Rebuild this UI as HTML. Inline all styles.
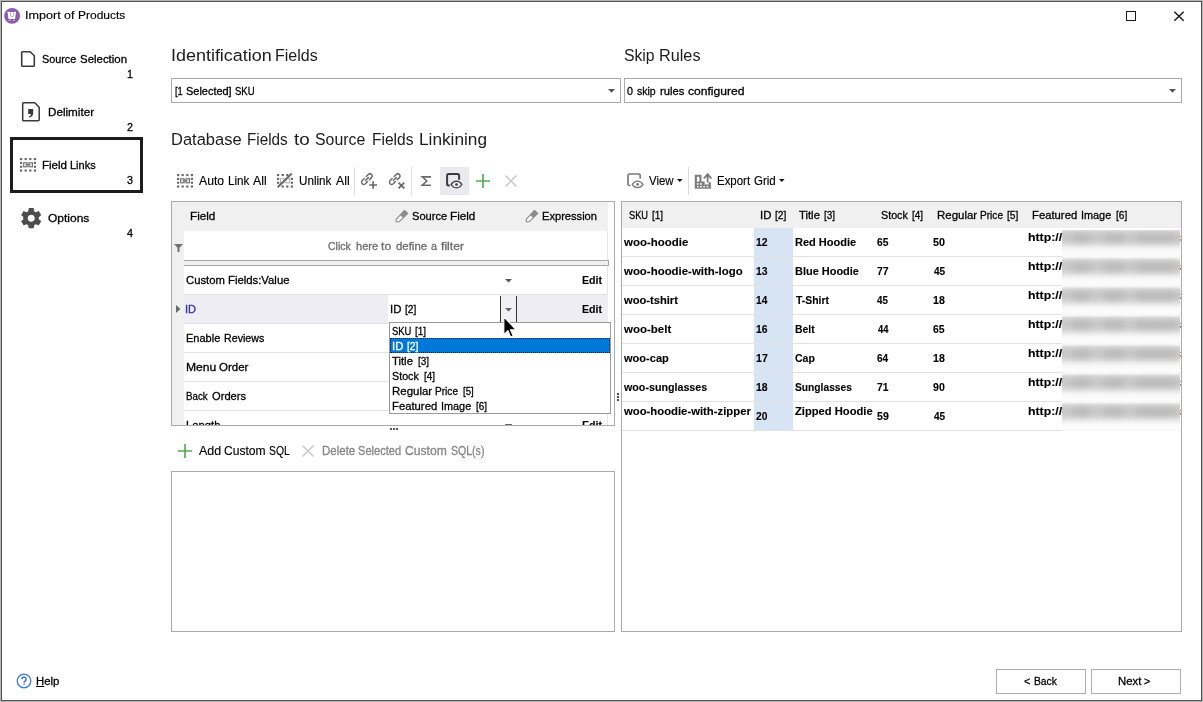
<!DOCTYPE html>
<html><head><meta charset="utf-8"><title>Import of Products</title>
<style>
*{box-sizing:border-box;margin:0;padding:0}
html,body{width:1203px;height:702px;overflow:hidden;background:#fff}
body{position:relative;font-family:"Liberation Sans",sans-serif;font-size:12px;color:#000;-webkit-text-stroke:0.3px currentColor}
.a{position:absolute}
.t{position:absolute;white-space:nowrap;line-height:20px;height:20px;transform-origin:0 0}
.box{position:absolute;border:1px solid #ababab;background:#fff}
.ln{position:absolute;height:1px;background:#e2e2e2}
svg{position:absolute;overflow:visible}
</style></head><body>
<!-- window frame -->
<div class="a" style="left:0;top:0;width:1203px;height:702px;border:1px solid #b4b4b4"></div>
<div class="a" style="left:1px;top:1px;width:1201px;height:700px;border:1px solid #555"></div>

<!-- title bar -->
<svg style="left:0;top:0" width="1" height="1"><circle cx="12.100" cy="15.900" r="7.900" fill="#8a5cb0"/><path d="M7.100 11.700H9.300V12.100H14.300V11.700H16L15.200 18.300Q15.100 18.900 14.500 18.900H9Q8.400 18.900 8.300 18.300L7.700 13Z" fill="#fff"/><path d="M10.400 12.300V15.100A1.550 1.550 0 0 0 13.500 15.100V12.300" stroke="#a99bc6" stroke-width=".800" fill="none"/><rect x="8.700" y="19.700" width="1.800" height="1.100" rx=".5" fill="#efe6f6"/><rect x="12.900" y="19.700" width="1.800" height="1.100" rx=".5" fill="#efe6f6"/></svg>
<div class="a" style="left:1126px;top:11px;width:10px;height:10px;border:1px solid #1a1a1a"></div>
<svg style="left:1174px;top:11px" width="10" height="10"><path d="M0.3 0.8L9.7 9.8M9.7 0.8L0.3 9.8" stroke="#1a1a1a" stroke-width="1.450" fill="none"/></svg>

<!-- sidebar icons -->
<svg style="left:21px;top:51px" width="14" height="16" viewBox="0 0 14 16"><path d="M1.6.7h7.6l4.1 4.1v9.6a.9.9 0 0 1-.9.9H1.6a.9.9 0 0 1-.9-.9V1.6a.9.9 0 0 1 .9-.9z" fill="none" stroke="#3a3a3a" stroke-width="1.600" stroke-linejoin="round"/></svg>
<svg style="left:22px;top:102px" width="18" height="20" viewBox="0 0 18 20"><path d="M1.6.8h11.2l4.4 4.4v12.6a.9.9 0 0 1-.9.9H1.6a.9.9 0 0 1-.9-.9V1.7a.9.9 0 0 1 .9-.9z" fill="none" stroke="#3a3a3a" stroke-width="1.5" stroke-linejoin="round"/><path d="M6.2 7h5v4.3c0 2.2-1.400 3.800-3.800 4.300l-.5-1.200c1.300-.4 2-1.100 2.100-2.400H6.200z" fill="#3a3a3a"/></svg>
<div class="a" style="left:10px;top:137px;width:133px;height:56px;border:3px solid #1c1c1c"></div>
<svg id="fl-ico" style="left:20px;top:158px" width="16" height="14" viewBox="0 0 16 14"><g fill="#686868"><rect x="0" y="0" width="2.200" height="2.100"/><rect x="4.6" y="0" width="2.200" height="2.100"/><rect x="9.2" y="0" width="2.200" height="2.100"/><rect x="13.8" y="0" width="2.200" height="2.100"/><rect x="0" y="3.85" width="2.200" height="2.100"/><rect x="13.8" y="3.85" width="2.200" height="2.100"/><rect x="0" y="7.7" width="2.200" height="2.100"/><rect x="13.8" y="7.7" width="2.200" height="2.100"/><rect x="0" y="11.5" width="2.200" height="2.100"/><rect x="4.6" y="11.5" width="2.200" height="2.100"/><rect x="9.2" y="11.5" width="2.200" height="2.100"/><rect x="13.8" y="11.5" width="2.200" height="2.100"/></g><g fill="none" stroke="#707070" stroke-width="1.150"><rect x="3.700" y="4.800" width="3.400" height="4"/><rect x="9" y="4.800" width="3.400" height="4"/><path d="M5.500 6.800h5"/></g></svg>
<svg style="left:18.600px;top:205.700px" width="24.400" height="24.400" viewBox="0 0 24 24"><path fill="#4d4d4d" d="M19.430 12.980c.04-.32.070-.64.070-.98s-.03-.66-.07-.98l2.110-1.650c.19-.15.240-.42.120-.64l-2-3.460c-.12-.22-.39-.3-.61-.22l-2.490 1c-.52-.4-1.080-.73-1.690-.98l-.38-2.650C14.460 2.180 14.250 2 14 2h-4c-.25 0-.46.180-.49.420l-.38 2.650c-.61.250-1.170.59-1.690.98l-2.490-1c-.23-.09-.49 0-.61.220l-2 3.460c-.13.220-.07.490.12.640l2.110 1.650c-.4.320-.7.650-.7.980s.3.660.7.980l-2.110 1.650c-.19.150-.24.420-.12.640l2 3.460c.12.220.39.300.61.220l2.490-1c.52.400 1.080.73 1.690.98l.38 2.650c.3.240.24.420.49.420h4c.25 0 .46-.18.490-.42l.38-2.650c.61-.25 1.170-.59 1.690-.98l2.490 1c.23.090.49 0 .61-.22l2-3.460c.12-.22.070-.49-.12-.64l-2.110-1.650zM12 15.500c-1.930 0-3.500-1.570-3.500-3.500s1.570-3.500 3.500-3.500 3.500 1.570 3.500 3.500-1.570 3.500-3.500 3.500z"/></svg>

<!-- combos -->
<div class="box" style="left:171px;top:78px;width:450px;height:25px"></div>
<svg style="left:608px;top:89px" width="7" height="4"><path d="M0 0h7L3.500 3.800z" fill="#555"/></svg>
<div class="box" style="left:624px;top:78px;width:558px;height:25px"></div>
<svg style="left:1168.500px;top:89px" width="7" height="4"><path d="M0 0h7L3.500 3.800z" fill="#555"/></svg>

<!-- left toolbar -->
<svg style="left:177px;top:174.300px" width="16" height="14" viewBox="0 0 16 14"><g fill="#686868"><rect x="0" y="0" width="2.200" height="2.100"/><rect x="4.6" y="0" width="2.200" height="2.100"/><rect x="9.2" y="0" width="2.200" height="2.100"/><rect x="13.8" y="0" width="2.200" height="2.100"/><rect x="0" y="3.85" width="2.200" height="2.100"/><rect x="13.8" y="3.85" width="2.200" height="2.100"/><rect x="0" y="7.7" width="2.200" height="2.100"/><rect x="13.8" y="7.7" width="2.200" height="2.100"/><rect x="0" y="11.5" width="2.200" height="2.100"/><rect x="4.6" y="11.5" width="2.200" height="2.100"/><rect x="9.2" y="11.5" width="2.200" height="2.100"/><rect x="13.8" y="11.5" width="2.200" height="2.100"/></g><g fill="none" stroke="#707070" stroke-width="1.150"><rect x="3.700" y="4.800" width="3.400" height="4"/><rect x="9" y="4.800" width="3.400" height="4"/><path d="M5.500 6.800h5"/></g></svg>
<svg style="left:277px;top:174.300px" width="16" height="14" viewBox="0 0 16 14"><g fill="#686868"><rect x="0" y="0" width="2.200" height="2.100"/><rect x="4.6" y="0" width="2.200" height="2.100"/><rect x="9.2" y="0" width="2.200" height="2.100"/><rect x="0" y="3.85" width="2.200" height="2.100"/><rect x="13.8" y="3.85" width="2.200" height="2.100"/><rect x="0" y="7.7" width="2.200" height="2.100"/><rect x="13.8" y="7.7" width="2.200" height="2.100"/><rect x="4.6" y="11.5" width="2.200" height="2.100"/><rect x="9.2" y="11.5" width="2.200" height="2.100"/><rect x="13.8" y="11.5" width="2.200" height="2.100"/></g><g fill="none" stroke="#b0b0b0" stroke-width="1"><rect x="3.500" y="4.700" width="3.600" height="4.200"/><rect x="9" y="4.700" width="3.600" height="4.200"/></g><path d="M0.600 13.200L14.800 -.5" stroke="#6a6a6a" stroke-width="2"/></svg>
<div class="a" style="left:354px;top:167px;width:1px;height:28px;background:#dcdcdc"></div>
<!-- link + -->
<svg style="left:0;top:0" width="1" height="1"><g transform="translate(366.85 179.05) rotate(-45)" fill="none" stroke="#6e6e6e" stroke-width="1.5" stroke-linecap="round"><path d="M-1.400 -2.250H-4.300A2.250 2.250 0 0 0 -4.300 2.250H-1.400"/><path d="M1.400 2.250H4.300A2.250 2.250 0 0 0 4.300 -2.250H1.400"/><path d="M-2 0H2"/></g><path d="M369.200 185H377M373.100 181.200V188.800" stroke="#666" stroke-width="1.600" fill="none"/></svg>
<!-- link x -->
<svg style="left:0;top:0" width="1" height="1"><g transform="translate(394.75 179.05) rotate(-45)" fill="none" stroke="#6e6e6e" stroke-width="1.5" stroke-linecap="round"><path d="M-1.400 -2.250H-4.300A2.250 2.250 0 0 0 -4.300 2.250H-1.400"/><path d="M1.400 2.250H4.300A2.250 2.250 0 0 0 4.300 -2.250H1.400"/><path d="M-2 0H2"/></g><path d="M398.500 182.600l5.800 5.800M404.300 182.600l-5.800 5.800" stroke="#666" stroke-width="1.700" fill="none"/></svg>
<div class="a" style="left:411px;top:167px;width:1px;height:28px;background:#dcdcdc"></div>
<!-- sigma -->
<svg style="left:0;top:0" width="1" height="1"><path d="M431 176.800H422.300L426.800 181L422.300 185.200H431" fill="none" stroke="#6c6c6c" stroke-width="1.650" stroke-linejoin="miter"/></svg>
<div class="a" style="left:440px;top:167px;width:29px;height:28px;background:#e9e9ef"></div>
<svg style="left:0;top:0" width="1" height="1"><path d="M449.800 185.500H448.600A1.500 1.500 0 0 1 447.100 184V175.500A1.500 1.500 0 0 1 448.600 174H457.600A1.500 1.500 0 0 1 459.100 175.500V179.700" fill="none" stroke="#3a3a40" stroke-width="2"/><path d="M451.1 184.5C452.7 181.9 454.5 181.2 456.5 181.2S460.3 181.9 461.9 184.5C460.3 187.1 458.5 187.8 456.5 187.8S452.7 187.1 451.1 184.5Z" fill="#e9e9ee" stroke="#3a3a40" stroke-width="1.250"/><circle cx="456.500" cy="184.500" r="1.350" fill="#3a3a40"/></svg>
<svg style="left:476px;top:174px" width="14" height="14"><path d="M7 0v14M0 7h14" stroke="#58ab58" stroke-width="1.700"/></svg>
<svg style="left:505px;top:175px" width="12" height="12"><path d="M0.500 0.500l11 11M11.500 0.500l-11 11" stroke="#c9c9c9" stroke-width="1.500"/></svg>

<!-- left grid -->
<div class="box" style="left:171px;top:201px;width:444px;height:225px"></div>
<div class="a" style="left:172px;top:202px;width:436px;height:29px;background:#f0f0f0"></div>
<div class="a" style="left:172px;top:202px;width:12px;height:223px;background:#f0f0f0"></div>
<div class="a" style="left:607px;top:231px;width:1px;height:194px;background:#e6e6e6"></div>
<svg style="left:395px;top:209px" width="14" height="14" viewBox="0 0 14 14"><path d="M1.200 12.800L1.300 10.100L9.500 1.500L12.700 4.400L4.300 12.700Z" fill="#fafafa" stroke="#8c8c8c" stroke-width="1.100" stroke-linejoin="round"/><path d="M5.300 5.900L9.500 1.500L12.700 4.400L8.400 8.800Z" fill="#8c8c8c" stroke="#8c8c8c" stroke-width=".6"/></svg>
<svg style="left:524.7px;top:209px" width="14" height="14" viewBox="0 0 14 14"><path d="M1.200 12.800L1.300 10.100L9.500 1.500L12.700 4.400L4.300 12.700Z" fill="#fafafa" stroke="#8c8c8c" stroke-width="1.100" stroke-linejoin="round"/><path d="M5.300 5.900L9.500 1.500L12.700 4.400L8.400 8.800Z" fill="#8c8c8c" stroke="#8c8c8c" stroke-width=".6"/></svg>
<svg style="left:173.500px;top:244px" width="9" height="8" viewBox="0 0 9 8"><path d="M0 0h9L5.500 3.800v4.200h-2V3.800z" fill="#707070"/></svg>
<div class="a" style="left:184px;top:260px;width:425px;height:6px;border:1px solid #a6a6a6;border-left:0;background:#f0f0f0"></div>
<div class="ln" style="left:184px;top:294px;width:424px"></div>
<div class="a" style="left:184px;top:295px;width:424px;height:28px;background:#ededf3"></div>
<div class="ln" style="left:184px;top:323px;width:424px"></div>
<div class="ln" style="left:184px;top:352px;width:424px"></div>
<div class="ln" style="left:184px;top:381px;width:424px"></div>
<div class="ln" style="left:184px;top:410px;width:424px"></div>
<svg style="left:504.500px;top:279px" width="7" height="4"><path d="M0 0h7L3.500 3.600z" fill="#555"/></svg>
<div class="a" style="left:504.500px;top:424px;width:7px;height:1px;background:#666"></div>
<svg style="left:176px;top:305px" width="5" height="8"><path d="M0 0l4.500 4L0 8z" fill="#6a6a6a"/></svg>
<!-- editor -->
<div class="a" style="left:388px;top:295px;width:112px;height:28px;background:#fff"></div>
<div class="a" style="left:500px;top:296px;width:17px;height:27px;background:#f0f0f5;border-left:1px solid #333;border-right:1px solid #333"></div>
<svg style="left:504.500px;top:308px" width="7" height="4"><path d="M0 0h7L3.500 3.600z" fill="#666"/></svg>
<!-- dropdown list -->
<div class="a" style="left:389px;top:322px;width:222px;height:92px;border:1px solid #9a9a9a;background:#fff"></div>
<div class="a" style="left:390px;top:338px;width:220px;height:15px;background:#0078d7;border:1px dotted #10253a"></div>
<!-- splitter dots -->
<div class="a" style="left:390px;top:428px;width:2px;height:2px;background:#555;box-shadow:3px 0 0 #555,6px 0 0 #555"></div>
<div class="a" style="left:617px;top:393px;width:2px;height:2px;background:#4a4a4a;box-shadow:0 3px 0 #4a4a4a,0 6px 0 #4a4a4a"></div>

<!-- sql toolbar -->
<svg style="left:178px;top:444px" width="14" height="14"><path d="M7 0v14M0 7h14" stroke="#58ab58" stroke-width="1.700"/></svg>
<svg style="left:302px;top:445px" width="12" height="12"><path d="M0.500 0.500l11 11M11.500 0.500l-11 11" stroke="#c9c9c9" stroke-width="1.500"/></svg>
<div class="box" style="left:171px;top:471px;width:444px;height:161px"></div>

<!-- right toolbar -->
<svg style="left:0;top:0" width="1" height="1"><path d="M630.400 185.500H629.400A1.400 1.400 0 0 1 628 184.100V175.400A1.400 1.400 0 0 1 629.400 174H638.800A1.400 1.400 0 0 1 640.200 175.400V178.600" fill="none" stroke="#7a7a7a" stroke-width="1.700"/><path d="M632.2 184.4C633.8 181.8 635.6 181.1 637.6 181.1S641.4 181.8 643.0 184.4C641.4 187.0 639.6 187.7 637.6 187.7S633.8 187.0 632.2 184.4Z" fill="#fff" stroke="#7a7a7a" stroke-width="1.250"/><circle cx="637.600" cy="184.400" r="1.400" fill="#7a7a7a"/></svg>
<svg style="left:677px;top:179px" width="6" height="3"><path d="M0 0h5.600L2.800 3z" fill="#111"/></svg>
<div class="a" style="left:688px;top:167px;width:1px;height:28px;background:#dcdcdc"></div>
<svg style="left:0;top:0" width="1" height="1"><path d="M695 175H701.200V181.700H704.400V184.700H708.800V182.500H710.700V188.400H695Z" fill="#7c7c7c" stroke="#7c7c7c" stroke-width=".5" stroke-linejoin="round"/><g fill="#fff"><rect x="696.900" y="176.800" width="2.500" height="4.800"/><rect x="696.900" y="183.100" width="1.700" height="1.600"/><rect x="700.100" y="183.100" width="1.700" height="1.600"/><rect x="696.900" y="185.900" width="1.700" height="1.500"/><rect x="700.100" y="185.900" width="1.700" height="1.500"/><rect x="703.300" y="185.900" width="1.700" height="1.500"/><rect x="706.500" y="185.900" width="1.700" height="1.500"/></g><path d="M707.600 182.600V175M703.800 178.500L707.600 174.200L711.400 178.500" fill="none" stroke="#777" stroke-width="1.800"/></svg>
<svg style="left:779px;top:179px" width="6" height="3"><path d="M0 0h5.600L2.800 3z" fill="#111"/></svg>

<!-- right grid -->
<div class="box" style="left:621px;top:201px;width:561px;height:431px"></div>
<div class="a" style="left:622px;top:202px;width:559px;height:26px;background:#f0f0f0"></div>
<div class="a" style="left:754px;top:228px;width:39px;height:202px;background:#d6e4f4"></div>
<div class="ln" style="left:622px;top:256px;width:559px"></div><div class="ln" style="left:622px;top:285px;width:559px"></div><div class="ln" style="left:622px;top:314px;width:559px"></div><div class="ln" style="left:622px;top:343px;width:559px"></div><div class="ln" style="left:622px;top:372px;width:559px"></div><div class="ln" style="left:622px;top:401px;width:559px"></div><div class="ln" style="left:622px;top:430px;width:559px"></div>
<!-- blurred urls -->
<div class="a" style="left:1062px;top:230px;width:118px;height:201px;overflow:hidden">
<div class="a" style="left:0;top:0;width:118px;height:203px;background:repeating-linear-gradient(180deg,#e0e0e0 0px,#d2d2d2 2px,#cacaca 5px,#c8c8c8 8px,#cdcdcd 11px,#dadada 14px,#ececec 17px,#f8f8f8 20px,#fcfcfc 24px,#f6f6f6 27.500px,#e0e0e0 29px)"></div>
<div class="a" style="left:10px;top:4px;width:18px;height:8px;background:#a8a8a8;opacity:.45;filter:blur(3px);border-radius:4px"></div><div class="a" style="left:42px;top:4px;width:20px;height:8px;background:#a8a8a8;opacity:.45;filter:blur(3px);border-radius:4px"></div><div class="a" style="left:74px;top:4px;width:40px;height:8px;background:#a8a8a8;opacity:.45;filter:blur(3px);border-radius:4px"></div><div class="a" style="left:10px;top:33px;width:18px;height:8px;background:#a8a8a8;opacity:.45;filter:blur(3px);border-radius:4px"></div><div class="a" style="left:42px;top:33px;width:20px;height:8px;background:#a8a8a8;opacity:.45;filter:blur(3px);border-radius:4px"></div><div class="a" style="left:74px;top:33px;width:40px;height:8px;background:#a8a8a8;opacity:.45;filter:blur(3px);border-radius:4px"></div><div class="a" style="left:10px;top:62px;width:18px;height:8px;background:#a8a8a8;opacity:.45;filter:blur(3px);border-radius:4px"></div><div class="a" style="left:42px;top:62px;width:20px;height:8px;background:#a8a8a8;opacity:.45;filter:blur(3px);border-radius:4px"></div><div class="a" style="left:74px;top:62px;width:40px;height:8px;background:#a8a8a8;opacity:.45;filter:blur(3px);border-radius:4px"></div><div class="a" style="left:10px;top:91px;width:18px;height:8px;background:#a8a8a8;opacity:.45;filter:blur(3px);border-radius:4px"></div><div class="a" style="left:42px;top:91px;width:20px;height:8px;background:#a8a8a8;opacity:.45;filter:blur(3px);border-radius:4px"></div><div class="a" style="left:74px;top:91px;width:40px;height:8px;background:#a8a8a8;opacity:.45;filter:blur(3px);border-radius:4px"></div><div class="a" style="left:10px;top:120px;width:18px;height:8px;background:#a8a8a8;opacity:.45;filter:blur(3px);border-radius:4px"></div><div class="a" style="left:42px;top:120px;width:20px;height:8px;background:#a8a8a8;opacity:.45;filter:blur(3px);border-radius:4px"></div><div class="a" style="left:74px;top:120px;width:40px;height:8px;background:#a8a8a8;opacity:.45;filter:blur(3px);border-radius:4px"></div><div class="a" style="left:10px;top:149px;width:18px;height:8px;background:#a8a8a8;opacity:.45;filter:blur(3px);border-radius:4px"></div><div class="a" style="left:42px;top:149px;width:20px;height:8px;background:#a8a8a8;opacity:.45;filter:blur(3px);border-radius:4px"></div><div class="a" style="left:74px;top:149px;width:40px;height:8px;background:#a8a8a8;opacity:.45;filter:blur(3px);border-radius:4px"></div><div class="a" style="left:10px;top:178px;width:18px;height:8px;background:#a8a8a8;opacity:.45;filter:blur(3px);border-radius:4px"></div><div class="a" style="left:42px;top:178px;width:20px;height:8px;background:#a8a8a8;opacity:.45;filter:blur(3px);border-radius:4px"></div><div class="a" style="left:74px;top:178px;width:40px;height:8px;background:#a8a8a8;opacity:.45;filter:blur(3px);border-radius:4px"></div>
</div>
<div class="a" style="left:1180px;top:235.5px;width:1px;height:1.500px;background:#b98f5e"></div><div class="a" style="left:1180px;top:239.0px;width:1px;height:1.500px;background:#b98f5e"></div><div class="a" style="left:1180px;top:264.5px;width:1px;height:1.500px;background:#b98f5e"></div><div class="a" style="left:1180px;top:268.0px;width:1px;height:1.500px;background:#b98f5e"></div><div class="a" style="left:1180px;top:293.5px;width:1px;height:1.500px;background:#b98f5e"></div><div class="a" style="left:1180px;top:297.0px;width:1px;height:1.500px;background:#b98f5e"></div><div class="a" style="left:1180px;top:322.5px;width:1px;height:1.500px;background:#b98f5e"></div><div class="a" style="left:1180px;top:326.0px;width:1px;height:1.500px;background:#b98f5e"></div><div class="a" style="left:1180px;top:351.5px;width:1px;height:1.500px;background:#b98f5e"></div><div class="a" style="left:1180px;top:355.0px;width:1px;height:1.500px;background:#b98f5e"></div><div class="a" style="left:1180px;top:380.5px;width:1px;height:1.500px;background:#b98f5e"></div><div class="a" style="left:1180px;top:384.0px;width:1px;height:1.500px;background:#b98f5e"></div><div class="a" style="left:1180px;top:409.5px;width:1px;height:1.500px;background:#b98f5e"></div><div class="a" style="left:1180px;top:413.0px;width:1px;height:1.500px;background:#b98f5e"></div>

<!-- help -->
<svg style="left:16px;top:673px" width="16" height="16" viewBox="0 0 16 16"><circle cx="8" cy="8" r="6.800" fill="#fff" stroke="#3f7ad6" stroke-width="1.300"/><path d="M5.900 6.300a2.100 2.100 0 1 1 3.300 1.700c-.8.500-1.100.9-1.100 1.700" fill="none" stroke="#3f7ad6" stroke-width="1.600"/><rect x="7.400" y="10.600" width="1.400" height="1.400" fill="#3f7ad6"/></svg>
<div class="box" style="left:996px;top:669px;width:90px;height:25px;border-color:#adadad"></div>
<div class="box" style="left:1091px;top:669px;width:90px;height:25px;border-color:#adadad"></div>

<!-- texts -->
<div><span class="t" style="left:24.8px;top:5px;font-size:11.7px;-webkit-text-stroke:0.15px #000;transform:scaleX(1.080)">Import</span> <span class="t" style="left:64.0px;top:5px;font-size:11.7px;-webkit-text-stroke:0.15px #000;transform:scaleX(1.070)">of</span> <span class="t" style="left:78.3px;top:5px;font-size:11.7px;-webkit-text-stroke:0.15px #000;transform:scaleX(1.026)">Products</span></div>
<div><span class="t" style="left:41.9px;top:49px;font-size:11.7px;transform:scaleX(0.925)">Source</span> <span class="t" style="left:79.6px;top:49px;font-size:11.7px;transform:scaleX(0.979)">Selection</span></div>
<div><span class="t" style="left:127.2px;top:64px;font-size:11.7px;transform:scaleX(0.920)">1</span></div>
<div><span class="t" style="left:47.7px;top:102px;font-size:11.7px;transform:scaleX(0.999)">Delimiter</span></div>
<div><span class="t" style="left:127.0px;top:117px;font-size:11.7px;transform:scaleX(0.920)">2</span></div>
<div><span class="t" style="left:41.8px;top:155px;font-size:11.7px;transform:scaleX(0.988)">Field</span> <span class="t" style="left:70.2px;top:155px;font-size:11.7px;transform:scaleX(0.941)">Links</span></div>
<div><span class="t" style="left:126.8px;top:170px;font-size:11.7px;transform:scaleX(0.920)">3</span></div>
<div><span class="t" style="left:47.8px;top:208px;font-size:11.7px;transform:scaleX(1.027)">Options</span></div>
<div><span class="t" style="left:126.7px;top:223px;font-size:11.7px;transform:scaleX(0.920)">4</span></div>
<div><span class="t" style="left:170.9px;top:46px;font-size:16.8px;color:#1c1c1c;-webkit-text-stroke:0;transform:scaleX(1.069)">Identification</span> <span class="t" style="left:275.2px;top:46px;font-size:16.8px;color:#1c1c1c;-webkit-text-stroke:0;transform:scaleX(0.954)">Fields</span></div>
<div><span class="t" style="left:623.7px;top:46px;font-size:16.8px;color:#1c1c1c;-webkit-text-stroke:0;transform:scaleX(0.938)">Skip</span> <span class="t" style="left:659.1px;top:46px;font-size:16.8px;color:#1c1c1c;-webkit-text-stroke:0;transform:scaleX(0.968)">Rules</span></div>
<div><span class="t" style="left:171.2px;top:130px;font-size:16.8px;color:#1c1c1c;-webkit-text-stroke:0;transform:scaleX(0.982)">Database</span> <span class="t" style="left:247.1px;top:130px;font-size:16.8px;color:#1c1c1c;-webkit-text-stroke:0;transform:scaleX(0.909)">Fields</span> <span class="t" style="left:293.8px;top:130px;font-size:16.8px;color:#1c1c1c;-webkit-text-stroke:0;transform:scaleX(1.120)">to</span> <span class="t" style="left:315.1px;top:130px;font-size:16.8px;color:#1c1c1c;-webkit-text-stroke:0;transform:scaleX(0.946)">Source</span> <span class="t" style="left:371.6px;top:130px;font-size:16.8px;color:#1c1c1c;-webkit-text-stroke:0;transform:scaleX(0.927)">Fields</span> <span class="t" style="left:419.0px;top:130px;font-size:16.8px;color:#1c1c1c;-webkit-text-stroke:0;transform:scaleX(1.027)">Linkining</span></div>
<div><span class="t" style="left:174.8px;top:81.2px;font-size:11.7px;transform:scaleX(0.803)">[1</span> <span class="t" style="left:185.8px;top:81.2px;font-size:11.7px;transform:scaleX(0.937)">Selected]</span> <span class="t" style="left:235.1px;top:81.2px;font-size:11.7px;transform:scaleX(0.814)">SKU</span></div>
<div><span class="t" style="left:626.7px;top:81.2px;font-size:11.7px;transform:scaleX(0.920)">0</span> <span class="t" style="left:636.6px;top:81.2px;font-size:11.7px;transform:scaleX(0.896)">skip</span> <span class="t" style="left:659.8px;top:81.2px;font-size:11.7px;transform:scaleX(0.957)">rules</span> <span class="t" style="left:687.8px;top:81.2px;font-size:11.7px;transform:scaleX(1.034)">configured</span></div>
<div><span class="t" style="left:199.0px;top:171px;font-size:12.7px;-webkit-text-stroke:0.15px #000;transform:scaleX(0.963)">Auto</span> <span class="t" style="left:227.9px;top:171px;font-size:12.7px;-webkit-text-stroke:0.15px #000;transform:scaleX(0.922)">Link</span> <span class="t" style="left:253.0px;top:171px;font-size:12.7px;-webkit-text-stroke:0.15px #000;transform:scaleX(0.968)">All</span></div>
<div><span class="t" style="left:299.3px;top:171px;font-size:12.7px;-webkit-text-stroke:0.15px #000;transform:scaleX(0.919)">Unlink</span> <span class="t" style="left:336.4px;top:171px;font-size:12.7px;-webkit-text-stroke:0.15px #000;transform:scaleX(0.968)">All</span></div>
<div><span class="t" style="left:649.0px;top:171px;font-size:12.7px;-webkit-text-stroke:0.15px #000;transform:scaleX(0.901)">View</span></div>
<div><span class="t" style="left:717.0px;top:171px;font-size:12.7px;-webkit-text-stroke:0.15px #000;transform:scaleX(0.902)">Export</span> <span class="t" style="left:754.0px;top:171px;font-size:12.7px;-webkit-text-stroke:0.15px #000;transform:scaleX(0.907)">Grid</span></div>
<div><span class="t" style="left:199.0px;top:440.8px;font-size:12.7px;-webkit-text-stroke:0.15px #000;transform:scaleX(0.981)">Add</span> <span class="t" style="left:224.1px;top:440.8px;font-size:12.7px;-webkit-text-stroke:0.15px #000;transform:scaleX(0.950)">Custom</span> <span class="t" style="left:269.3px;top:440.8px;font-size:12.7px;-webkit-text-stroke:0.15px #000;transform:scaleX(0.818)">SQL</span></div>
<div><span class="t" style="left:321.8px;top:440.8px;font-size:12.7px;color:#868686;transform:scaleX(0.906)">Delete</span> <span class="t" style="left:358.3px;top:440.8px;font-size:12.7px;color:#868686;transform:scaleX(0.872)">Selected</span> <span class="t" style="left:405.4px;top:440.8px;font-size:12.7px;color:#868686;transform:scaleX(0.955)">Custom</span> <span class="t" style="left:451.1px;top:440.8px;font-size:12.7px;color:#868686;transform:scaleX(0.831)">SQL(s)</span></div>
<div><span class="t" style="left:189.8px;top:206px;font-size:11.7px;transform:scaleX(0.999)">Field</span></div>
<div><span class="t" style="left:411.7px;top:206px;font-size:11.7px;transform:scaleX(0.949)">Source</span> <span class="t" style="left:449.5px;top:206px;font-size:11.7px;transform:scaleX(0.999)">Field</span></div>
<div><span class="t" style="left:542.0px;top:206px;font-size:11.7px;transform:scaleX(0.951)">Expression</span></div>
<div><span class="t" style="left:327.8px;top:235.6px;font-size:11.7px;color:#6c6c6c;transform:scaleX(0.899)">Click</span> <span class="t" style="left:355.7px;top:235.6px;font-size:11.7px;color:#6c6c6c;transform:scaleX(0.945)">here</span> <span class="t" style="left:381.1px;top:235.6px;font-size:11.7px;color:#6c6c6c;transform:scaleX(1.044)">to</span> <span class="t" style="left:395.8px;top:235.6px;font-size:11.7px;color:#6c6c6c;transform:scaleX(0.976)">define</span> <span class="t" style="left:431.0px;top:235.6px;font-size:11.7px;color:#6c6c6c;transform:scaleX(0.920)">a</span> <span class="t" style="left:440.9px;top:235.6px;font-size:11.7px;color:#6c6c6c;transform:scaleX(1.043)">filter</span></div>
<div><span class="t" style="left:186.1px;top:269.6px;font-size:11.7px;transform:scaleX(0.966)">Custom</span> <span class="t" style="left:227.9px;top:269.6px;font-size:11.7px;transform:scaleX(0.969)">Fields:Value</span></div>
<div><span class="t" style="left:184.9px;top:298.6px;font-size:11.7px;color:#3b2a9e;transform:scaleX(0.947)">ID</span></div>
<div><span class="t" style="left:186.2px;top:327.6px;font-size:11.7px;transform:scaleX(0.941)">Enable</span> <span class="t" style="left:224.1px;top:327.6px;font-size:11.7px;transform:scaleX(0.913)">Reviews</span></div>
<div><span class="t" style="left:185.6px;top:356.6px;font-size:11.7px;transform:scaleX(1.038)">Menu</span> <span class="t" style="left:219.3px;top:356.6px;font-size:11.7px;transform:scaleX(0.983)">Order</span></div>
<div><span class="t" style="left:185.8px;top:385.6px;font-size:11.7px;transform:scaleX(0.833)">Back</span> <span class="t" style="left:212.2px;top:385.6px;font-size:11.7px;transform:scaleX(0.955)">Orders</span></div>
<div><span class="t" style="left:582.3px;top:269.6px;font-size:11.7px;font-weight:bold;-webkit-text-stroke:0.12px #000;transform:scaleX(0.910)">Edit</span></div>
<div><span class="t" style="left:582.3px;top:298.6px;font-size:11.7px;font-weight:bold;-webkit-text-stroke:0.12px #000;transform:scaleX(0.910)">Edit</span></div>
<div><span class="t" style="left:389.9px;top:299px;font-size:11.7px;transform:scaleX(0.974)">ID</span> <span class="t" style="left:405.1px;top:299px;font-size:11.7px;transform:scaleX(0.869)">[2]</span></div>
<div><span class="t" style="left:392.0px;top:320.8px;font-size:11.7px;transform:scaleX(0.809)">SKU</span> <span class="t" style="left:415.3px;top:320.8px;font-size:11.7px;transform:scaleX(0.853)">[1]</span></div>
<div><span class="t" style="left:391.8px;top:335.8px;font-size:11.7px;color:#fff;transform:scaleX(0.974)">ID</span> <span class="t" style="left:406.8px;top:335.8px;font-size:11.7px;color:#fff;transform:scaleX(0.879)">[2]</span></div>
<div><span class="t" style="left:391.8px;top:350.8px;font-size:11.7px;transform:scaleX(0.966)">Title</span> <span class="t" style="left:417.9px;top:350.8px;font-size:11.7px;transform:scaleX(0.853)">[3]</span></div>
<div><span class="t" style="left:391.7px;top:365.8px;font-size:11.7px;transform:scaleX(0.917)">Stock</span> <span class="t" style="left:423.6px;top:365.8px;font-size:11.7px;transform:scaleX(0.853)">[4]</span></div>
<div><span class="t" style="left:392.1px;top:380.8px;font-size:11.7px;transform:scaleX(0.980)">Regular</span> <span class="t" style="left:435.2px;top:380.8px;font-size:11.7px;transform:scaleX(0.864)">Price</span> <span class="t" style="left:462.5px;top:380.8px;font-size:11.7px;transform:scaleX(0.828)">[5]</span></div>
<div><span class="t" style="left:392.1px;top:395.8px;font-size:11.7px;transform:scaleX(0.966)">Featured</span> <span class="t" style="left:441.3px;top:395.8px;font-size:11.7px;transform:scaleX(0.929)">Image</span> <span class="t" style="left:475.7px;top:395.8px;font-size:11.7px;transform:scaleX(0.853)">[6]</span></div>
<div><span class="t" style="left:628.5px;top:205.4px;font-size:11.7px;transform:scaleX(0.792)">SKU</span> <span class="t" style="left:652.2px;top:205.4px;font-size:11.7px;transform:scaleX(0.853)">[1]</span></div>
<div><span class="t" style="left:760.1px;top:205.4px;font-size:11.7px;transform:scaleX(0.974)">ID</span> <span class="t" style="left:774.6px;top:205.4px;font-size:11.7px;transform:scaleX(0.879)">[2]</span></div>
<div><span class="t" style="left:799.0px;top:205.4px;font-size:11.7px;transform:scaleX(0.966)">Title</span> <span class="t" style="left:823.6px;top:205.4px;font-size:11.7px;transform:scaleX(0.853)">[3]</span></div>
<div><span class="t" style="left:881.1px;top:205.4px;font-size:11.7px;transform:scaleX(0.917)">Stock</span> <span class="t" style="left:912.0px;top:205.4px;font-size:11.7px;transform:scaleX(0.853)">[4]</span></div>
<div><span class="t" style="left:936.5px;top:205.4px;font-size:11.7px;transform:scaleX(0.980)">Regular</span> <span class="t" style="left:979.6px;top:205.4px;font-size:11.7px;transform:scaleX(0.864)">Price</span> <span class="t" style="left:1007.2px;top:205.4px;font-size:11.7px;transform:scaleX(0.869)">[5]</span></div>
<div><span class="t" style="left:1031.8px;top:205.4px;font-size:11.7px;transform:scaleX(0.966)">Featured</span> <span class="t" style="left:1080.5px;top:205.4px;font-size:11.7px;transform:scaleX(0.929)">Image</span> <span class="t" style="left:1115.8px;top:205.4px;font-size:11.7px;transform:scaleX(0.862)">[6]</span></div>
<div><span class="t" style="left:36.1px;top:670.7px;font-size:11.7px;transform:scaleX(0.972)"><u>H</u>elp</span></div>
<div><span class="t" style="left:1023.5px;top:670.6px;font-size:11.7px;transform:scaleX(0.920)">&lt;</span> <span class="t" style="left:1033.6px;top:670.6px;font-size:11.7px;transform:scaleX(0.878)">Back</span></div>
<div><span class="t" style="left:1117.9px;top:670.6px;font-size:11.7px;transform:scaleX(0.973)">Next</span> <span class="t" style="left:1144.3px;top:670.6px;font-size:11.7px;transform:scaleX(0.920)">&gt;</span></div>
<div><span class="t" style="left:624.1px;top:231.6px;font-size:11.7px;font-weight:bold;-webkit-text-stroke:0.12px #000;transform:scaleX(0.980)">woo-hoodie</span></div>
<div><span class="t" style="left:755.6px;top:231.6px;font-size:11.7px;font-weight:bold;-webkit-text-stroke:0.12px #000;transform:scaleX(0.892)">12</span></div>
<div><span class="t" style="left:795.0px;top:231.6px;font-size:11.7px;font-weight:bold;-webkit-text-stroke:0.12px #000;transform:scaleX(0.942)">Red Hoodie</span></div>
<div><span class="t" style="left:877.1px;top:231.6px;font-size:11.7px;font-weight:bold;-webkit-text-stroke:0.12px #000;transform:scaleX(0.880)">65</span></div>
<div><span class="t" style="left:932.8px;top:231.6px;font-size:11.7px;font-weight:bold;-webkit-text-stroke:0.12px #000;transform:scaleX(0.920)">50</span></div>
<div><span class="t" style="left:1027.6px;top:227.2px;font-size:11.7px;font-weight:bold;-webkit-text-stroke:0.12px #000;transform:scaleX(1.053)">http:<b>//</b></span></div>
<div><span class="t" style="left:624.1px;top:260.6px;font-size:11.7px;font-weight:bold;-webkit-text-stroke:0.12px #000;transform:scaleX(0.978)">woo-hoodie-with-logo</span></div>
<div><span class="t" style="left:755.6px;top:260.6px;font-size:11.7px;font-weight:bold;-webkit-text-stroke:0.12px #000;transform:scaleX(0.892)">13</span></div>
<div><span class="t" style="left:795.0px;top:260.6px;font-size:11.7px;font-weight:bold;-webkit-text-stroke:0.12px #000;transform:scaleX(0.938)">Blue Hoodie</span></div>
<div><span class="t" style="left:876.9px;top:260.6px;font-size:11.7px;font-weight:bold;-webkit-text-stroke:0.12px #000;transform:scaleX(0.894)">77</span></div>
<div><span class="t" style="left:933.5px;top:260.6px;font-size:11.7px;font-weight:bold;-webkit-text-stroke:0.12px #000;transform:scaleX(0.859)">45</span></div>
<div><span class="t" style="left:1027.6px;top:256.2px;font-size:11.7px;font-weight:bold;-webkit-text-stroke:0.12px #000;transform:scaleX(1.053)">http:<b>//</b></span></div>
<div><span class="t" style="left:624.0px;top:289.6px;font-size:11.7px;font-weight:bold;-webkit-text-stroke:0.12px #000;transform:scaleX(0.954)">woo-tshirt</span></div>
<div><span class="t" style="left:755.7px;top:289.6px;font-size:11.7px;font-weight:bold;-webkit-text-stroke:0.12px #000;transform:scaleX(0.875)">14</span></div>
<div><span class="t" style="left:796.1px;top:289.6px;font-size:11.7px;font-weight:bold;-webkit-text-stroke:0.12px #000;transform:scaleX(0.892)">T-Shirt</span></div>
<div><span class="t" style="left:877.1px;top:289.6px;font-size:11.7px;font-weight:bold;-webkit-text-stroke:0.12px #000;transform:scaleX(0.837)">45</span></div>
<div><span class="t" style="left:932.8px;top:289.6px;font-size:11.7px;font-weight:bold;-webkit-text-stroke:0.12px #000;transform:scaleX(0.906)">18</span></div>
<div><span class="t" style="left:1027.6px;top:285.2px;font-size:11.7px;font-weight:bold;-webkit-text-stroke:0.12px #000;transform:scaleX(1.053)">http:<b>//</b></span></div>
<div><span class="t" style="left:624.1px;top:318.6px;font-size:11.7px;font-weight:bold;-webkit-text-stroke:0.12px #000;transform:scaleX(0.983)">woo-belt</span></div>
<div><span class="t" style="left:755.6px;top:318.6px;font-size:11.7px;font-weight:bold;-webkit-text-stroke:0.12px #000;transform:scaleX(0.892)">16</span></div>
<div><span class="t" style="left:795.1px;top:318.6px;font-size:11.7px;font-weight:bold;-webkit-text-stroke:0.12px #000;transform:scaleX(0.889)">Belt</span></div>
<div><span class="t" style="left:877.6px;top:318.6px;font-size:11.7px;font-weight:bold;-webkit-text-stroke:0.12px #000;transform:scaleX(0.804)">44</span></div>
<div><span class="t" style="left:933.1px;top:318.6px;font-size:11.7px;font-weight:bold;-webkit-text-stroke:0.12px #000;transform:scaleX(0.898)">65</span></div>
<div><span class="t" style="left:1027.6px;top:314.2px;font-size:11.7px;font-weight:bold;-webkit-text-stroke:0.12px #000;transform:scaleX(1.053)">http:<b>//</b></span></div>
<div><span class="t" style="left:624.0px;top:347.6px;font-size:11.7px;font-weight:bold;-webkit-text-stroke:0.12px #000;transform:scaleX(0.945)">woo-cap</span></div>
<div><span class="t" style="left:755.6px;top:347.6px;font-size:11.7px;font-weight:bold;-webkit-text-stroke:0.12px #000;transform:scaleX(0.907)">17</span></div>
<div><span class="t" style="left:795.3px;top:347.6px;font-size:11.7px;font-weight:bold;-webkit-text-stroke:0.12px #000;transform:scaleX(0.901)">Cap</span></div>
<div><span class="t" style="left:877.2px;top:347.6px;font-size:11.7px;font-weight:bold;-webkit-text-stroke:0.12px #000;transform:scaleX(0.863)">64</span></div>
<div><span class="t" style="left:932.8px;top:347.6px;font-size:11.7px;font-weight:bold;-webkit-text-stroke:0.12px #000;transform:scaleX(0.906)">18</span></div>
<div><span class="t" style="left:1027.6px;top:343.2px;font-size:11.7px;font-weight:bold;-webkit-text-stroke:0.12px #000;transform:scaleX(1.053)">http:<b>//</b></span></div>
<div><span class="t" style="left:623.7px;top:376.6px;font-size:11.7px;font-weight:bold;-webkit-text-stroke:0.12px #000;transform:scaleX(0.915)">woo-sunglasses</span></div>
<div><span class="t" style="left:755.6px;top:376.6px;font-size:11.7px;font-weight:bold;-webkit-text-stroke:0.12px #000;transform:scaleX(0.894)">18</span></div>
<div><span class="t" style="left:795.0px;top:376.6px;font-size:11.7px;font-weight:bold;-webkit-text-stroke:0.12px #000;transform:scaleX(0.876)">Sunglasses</span></div>
<div><span class="t" style="left:876.9px;top:376.6px;font-size:11.7px;font-weight:bold;-webkit-text-stroke:0.12px #000;transform:scaleX(0.880)">71</span></div>
<div><span class="t" style="left:933.1px;top:376.6px;font-size:11.7px;font-weight:bold;-webkit-text-stroke:0.12px #000;transform:scaleX(0.906)">90</span></div>
<div><span class="t" style="left:1027.6px;top:372.2px;font-size:11.7px;font-weight:bold;-webkit-text-stroke:0.12px #000;transform:scaleX(1.053)">http:<b>//</b></span></div>
<div><span class="t" style="left:624.0px;top:400.6px;font-size:11.7px;font-weight:bold;-webkit-text-stroke:0.12px #000;transform:scaleX(0.967)">woo-hoodie-with-zipper</span></div>
<div><span class="t" style="left:756.2px;top:405.6px;font-size:11.7px;font-weight:bold;-webkit-text-stroke:0.12px #000;transform:scaleX(0.874)">20</span></div>
<div><span class="t" style="left:795.2px;top:400.6px;font-size:11.7px;font-weight:bold;-webkit-text-stroke:0.12px #000;transform:scaleX(0.957)">Zipped Hoodie</span></div>
<div><span class="t" style="left:876.9px;top:405.6px;font-size:11.7px;font-weight:bold;-webkit-text-stroke:0.12px #000;transform:scaleX(0.905)">59</span></div>
<div><span class="t" style="left:933.5px;top:405.6px;font-size:11.7px;font-weight:bold;-webkit-text-stroke:0.12px #000;transform:scaleX(0.859)">45</span></div>
<div><span class="t" style="left:1027.6px;top:401.2px;font-size:11.7px;font-weight:bold;-webkit-text-stroke:0.12px #000;transform:scaleX(1.053)">http:<b>//</b></span></div>
<div class="a" style="left:0;top:0;width:1203px;height:425px;overflow:hidden"><div><span class="t" style="left:186.1px;top:414.6px;font-size:11.7px;transform:scaleX(0.962)">Length</span></div>
<div><span class="t" style="left:582.3px;top:414.6px;font-size:11.7px;font-weight:bold;-webkit-text-stroke:0.12px #000;transform:scaleX(0.910)">Edit</span></div></div>

<!-- cursor -->
<svg style="left:503px;top:316px" width="14" height="22.600" viewBox="0 0 13 21"><path d="M.8.900v16.400l3.800-3.700 2.500 5.900 2.300-1-2.500-5.700h5.300z" fill="#000" stroke="#fff" stroke-width="1" stroke-linejoin="round"/></svg>
</body></html>
